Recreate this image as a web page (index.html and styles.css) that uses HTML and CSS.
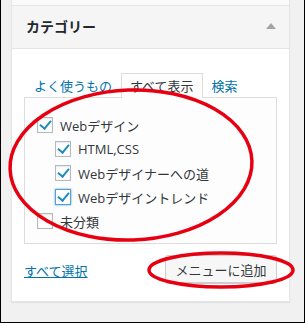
FILE: index.html
```html
<!DOCTYPE html>
<html lang="ja">
<head>
  <meta charset="UTF-8">
  <title>カテゴリー</title>
  <link rel="stylesheet" href="styles.css">
</head>
<body>
  <div class="frame">
    <div class="prev-card"></div>

    <div class="postbox">
      <div class="postbox-header">
        <h2>カテゴリー</h2>
        <span class="toggle"></span>
      </div>

      <div class="inside">
        <ul class="tabs">
          <li><a href="#">よく使うもの</a></li>
          <li class="active">すべて表示</li>
          <li><a href="#">検索</a></li>
        </ul>

        <div class="tab-panel">
          <label class="item"><span class="cb checked"></span>Webデザイン</label>
          <label class="item child"><span class="cb checked"></span>HTML,CSS</label>
          <label class="item child"><span class="cb checked"></span>Webデザイナーへの道</label>
          <label class="item child"><span class="cb checked focus"></span>Webデザイントレンド</label>
          <label class="item"><span class="cb"></span>未分類</label>
        </div>

        <div class="actions">
          <a href="#" class="select-all">すべて選択</a>
          <button class="button">メニューに追加</button>
        </div>
      </div>
    </div>

    <!-- hand-drawn highlight marks -->
    <svg class="marks" width="305" height="323" viewBox="0 0 305 323">
      <ellipse cx="131" cy="165" rx="121" ry="75" fill="none" stroke="#e60012" stroke-width="3.5" transform="rotate(-2 131 165)"/>
      <ellipse cx="221" cy="270" rx="72" ry="17" fill="none" stroke="#e60012" stroke-width="3.5"/>
    </svg>
  </div>
</body>
</html>
```

FILE: styles.css
```css
* {
  margin: 0;
  padding: 0;
  box-sizing: border-box;
}

body {
  background: #f1f1f1;
  font-family: "Open Sans", "Noto Sans CJK JP", sans-serif;
  color: #444;
}

.frame {
  position: relative;
  width: 305px;
  height: 323px;
  border: 1px solid #000;
  border-top: 0;
  padding: 0 14px 0 10px;
  overflow: hidden;
}

.prev-card {
  height: 5px;
  background: #fafafa;
  border-left: 1px solid #e5e5e5;
  border-right: 1px solid #e5e5e5;
}

/* Postbox */
.postbox {
  background: #fff;
  border: 1px solid #e5e5e5;
  box-shadow: 0 1px 1px rgba(0, 0, 0, 0.06);
}

.postbox-header {
  display: flex;
  align-items: center;
  justify-content: space-between;
  height: 43px;
  padding: 0 13px 0 14px;
  background: #f5f5f5;
  border-bottom: 1px solid #e5e5e5;
}

.postbox-header h2 {
  font-size: 14px;
  font-weight: 700;
  color: #23282d;
  font-family: "Noto Sans CJK JP", sans-serif;
  margin-top: -3px;
}

.toggle {
  width: 0;
  height: 0;
  border-left: 5px solid transparent;
  border-right: 5px solid transparent;
  border-bottom: 6px solid #a0a5aa;
  margin-top: -3px;
}

.inside {
  padding: 24px 12px 18px;
}

/* Tabs */
.tabs {
  list-style: none;
  display: flex;
  font-size: 13px;
  line-height: 23px;
  font-family: "Noto Sans CJK JP", sans-serif;
}

.tabs li {
  padding: 0 8px;
  border: 1px solid transparent;
  border-bottom: 0;
}

.tabs li:first-child {
  padding-left: 9px;
}

.tabs a {
  color: #0073aa;
  text-decoration: none;
}

.tabs .active {
  background: #fdfdfd;
  border-color: #dddddd;
  color: #32373c;
  margin-bottom: -1px;
  position: relative;
}

.tab-panel {
  background: #fdfdfd;
  border: 1px solid #dddddd;
  padding: 15px 12px 10px;
}

.item {
  display: flex;
  align-items: center;
  gap: 7px;
  height: 24px;
  font-size: 13px;
  color: #32373c;
}

.item.child {
  padding-left: 18px;
}

.cb {
  position: relative;
  flex: none;
  width: 16px;
  height: 16px;
  background: #fff;
  border: 1px solid #b4b9be;
  box-shadow: inset 0 1px 2px rgba(0, 0, 0, 0.1);
}

.cb.focus {
  border-color: #5b9dd9;
  box-shadow: 0 0 2px rgba(30, 140, 190, 0.8);
}

.cb.checked::after {
  content: "";
  position: absolute;
  left: 4px;
  top: 0px;
  width: 5px;
  height: 9px;
  border-right: 2.5px solid #1e8cbe;
  border-bottom: 2.5px solid #1e8cbe;
  transform: rotate(40deg);
}

/* Bottom actions */
.actions {
  display: flex;
  justify-content: space-between;
  align-items: center;
  margin-top: 11px;
}

.select-all {
  font-size: 13px;
  color: #0073aa;
  font-family: "Noto Sans CJK JP", sans-serif;
  margin-top: 2px;
}

.button {
  width: 112px;
  height: 28px;
  padding: 0;
  font-size: 13px;
  font-family: "Noto Sans CJK JP", sans-serif;
  color: #32373c;
  background: #f7f7f7;
  border: 1px solid #cccccc;
  border-radius: 3px;
  box-shadow: 0 1px 0 #ccc;
}

.marks {
  position: absolute;
  top: 0;
  left: -1px;
  pointer-events: none;
}
```
